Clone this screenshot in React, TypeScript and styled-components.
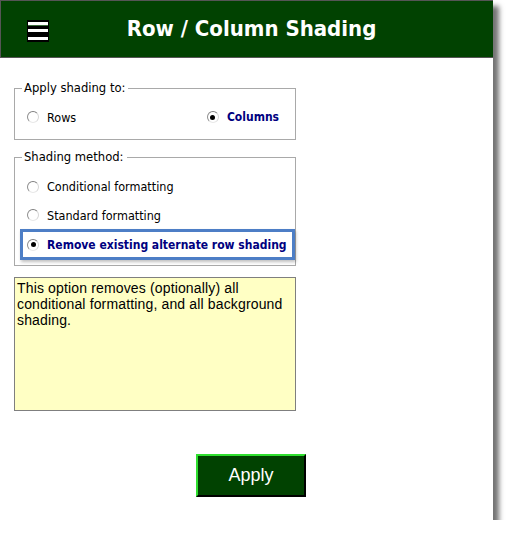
import React from "react";
import styled, { createGlobalStyle } from "styled-components";

const GlobalStyle = createGlobalStyle`
  html, body { margin: 0; padding: 0; background: #ffffff; }
  body { font-family: "DejaVu Sans", sans-serif; }
`;

const Window = styled.div`
  width: 493px;
  height: 520px;
  background: #ffffff;
  box-shadow: 6px 6px 5px rgba(0, 0, 0, 0.55);
  display: flex;
  flex-direction: column;
`;

const Header = styled.header`
  height: 56px;
  background: #014201;
  border-top: 1px solid #555555;
  border-left: 1px solid #555555;
  border-bottom: 1px solid #555555;
  display: flex;
  align-items: center;
  padding: 0 39px 0 26px;
  box-sizing: content-box;
`;

const MenuButton = styled.button`
  width: 22px;
  height: 22px;
  padding: 0;
  border: 0;
  background: transparent;
  display: flex;
  margin-top: 7px;
  margin-bottom: 3px;
`;

const Title = styled.h1`
  flex: 1;
  margin: 0;
  text-align: center;
  color: #ffffff;
  font-family: "DejaVu Sans Condensed", "DejaVu Sans", sans-serif;
  font-stretch: condensed;
  font-weight: bold;
  font-size: 22px;
  line-height: 26px;
`;

const Content = styled.main`
  flex: 1;
  padding: 23px 0 0 14px;
  display: flex;
  flex-direction: column;
`;

const Group = styled.fieldset<{ $gap?: number }>`
  width: 280px;
  margin: ${(p) => p.$gap ?? 0}px 0 0 0;
  padding: 0;
  border: 1px solid #a9a9a9;
  min-width: 0;
  font-family: "DejaVu Sans Condensed", "DejaVu Sans", sans-serif;
  font-stretch: condensed;
  font-size: 12.5px;
  color: #000000;
`;

const Legend = styled.legend`
  margin-left: 7px;
  padding: 0 3px 0 2px;
  line-height: 14px;
  font-size: 12.9px;
`;

const RadioRow = styled.div<{ $pad: string }>`
  display: flex;
  align-items: center;
  justify-content: space-between;
  padding: ${(p) => p.$pad};
`;

const Option = styled.label<{ $selected?: boolean; $height?: number }>`
  display: flex;
  align-items: center;
  gap: 8px;
  height: ${(p) => p.$height ?? 29}px;
  color: ${(p) => (p.$selected ? "#000080" : "#000000")};
  font-weight: ${(p) => (p.$selected ? "bold" : "normal")};
  font-size: ${(p) => (p.$selected ? "12px" : "12.5px")};
  white-space: nowrap;
`;

const OptionList = styled.div`
  display: flex;
  flex-direction: column;
  padding: 8px 0 5px 12px;
`;

const Highlight = styled.div`
  margin-left: -7px;
  margin-right: 0;
  height: 25px;
  border: 3px solid #4d7ec6;
  box-shadow: 1px 2px 3px rgba(0, 0, 0, 0.25);
  display: flex;
  align-items: center;
  padding-left: 4px;
`;

const Circle = styled.span<{ $checked?: boolean }>`
  width: 12px;
  height: 12px;
  border-radius: 50%;
  box-sizing: border-box;
  border: 1px solid;
  border-color: #7e7e7e #d6d6d6 #e8e8e8 #8e8e8e;
  background: #ffffff;
  display: flex;
  align-items: center;
  justify-content: center;
  flex: none;
  &::after {
    content: "";
    width: 5px;
    height: 5px;
    border-radius: 50%;
    background: ${(p) => (p.$checked ? "#000000" : "transparent")};
  }
`;

const Description = styled.div`
  width: 282px;
  height: 134px;
  box-sizing: border-box;
  margin-top: 11px;
  border: 1px solid #7f7f7f;
  background: #ffffc4;
  padding: 2px 2px;
  font-family: "Liberation Sans", Arial, sans-serif;
  font-size: 14px;
  letter-spacing: 0.15px;
  line-height: 16px;
  color: #000000;
`;

const Footer = styled.div`
  display: flex;
  justify-content: flex-start;
  padding: 43px 0 0 182px;
`;

const ApplyButton = styled.button`
  width: 110px;
  height: 43px;
  box-sizing: border-box;
  background: #014201;
  border: 2px solid;
  border-color: #2fe02f #000000 #000000 #2fe02f;
  color: #ffffff;
  font-family: "Liberation Sans", Arial, sans-serif;
  font-size: 18px;
  padding: 0;
`;

function Radio({ checked, label, selected }: { checked?: boolean; label: string; selected?: boolean }) {
  return (
    <Option $selected={selected} $height={18}>
      <Circle $checked={checked} />
      {label}
    </Option>
  );
}

export default function App() {
  return (
    <>
      <GlobalStyle />
      <Window>
        <Header>
          <MenuButton aria-label="Menu">
            <svg width="22" height="22" viewBox="0 0 22 22">
              <rect x="0" y="0" width="22" height="22" fill="#000000" />
              <rect x="1" y="2" width="20" height="3" fill="#ffffff" />
              <rect x="1" y="5" width="20" height="1" fill="#3a6a3a" />
              <rect x="1" y="9" width="20" height="3" fill="#ffffff" />
              <rect x="1" y="17" width="20" height="3" fill="#ffffff" />
            </svg>
          </MenuButton>
          <Title>Row / Column Shading</Title>
        </Header>
        <Content>
          <Group>
            <Legend>Apply shading to:</Legend>
            <RadioRow $pad="13px 16px 13px 12px">
              <Radio label="Rows" />
              <Radio label="Columns" checked selected />
            </RadioRow>
          </Group>
          <Group $gap={10}>
            <Legend>Shading method:</Legend>
            <OptionList>
              <Option>
                <Circle />
                Conditional formatting
              </Option>
              <Option $height={28}>
                <Circle />
                Standard formatting
              </Option>
              <Highlight>
                <Option $selected $height={25}>
                  <Circle $checked />
                  Remove existing alternate row shading
                </Option>
              </Highlight>
            </OptionList>
          </Group>
          <Description>
            This option removes (optionally) all conditional formatting, and all background shading.
          </Description>
          <Footer>
            <ApplyButton>Apply</ApplyButton>
          </Footer>
        </Content>
      </Window>
    </>
  );
}
